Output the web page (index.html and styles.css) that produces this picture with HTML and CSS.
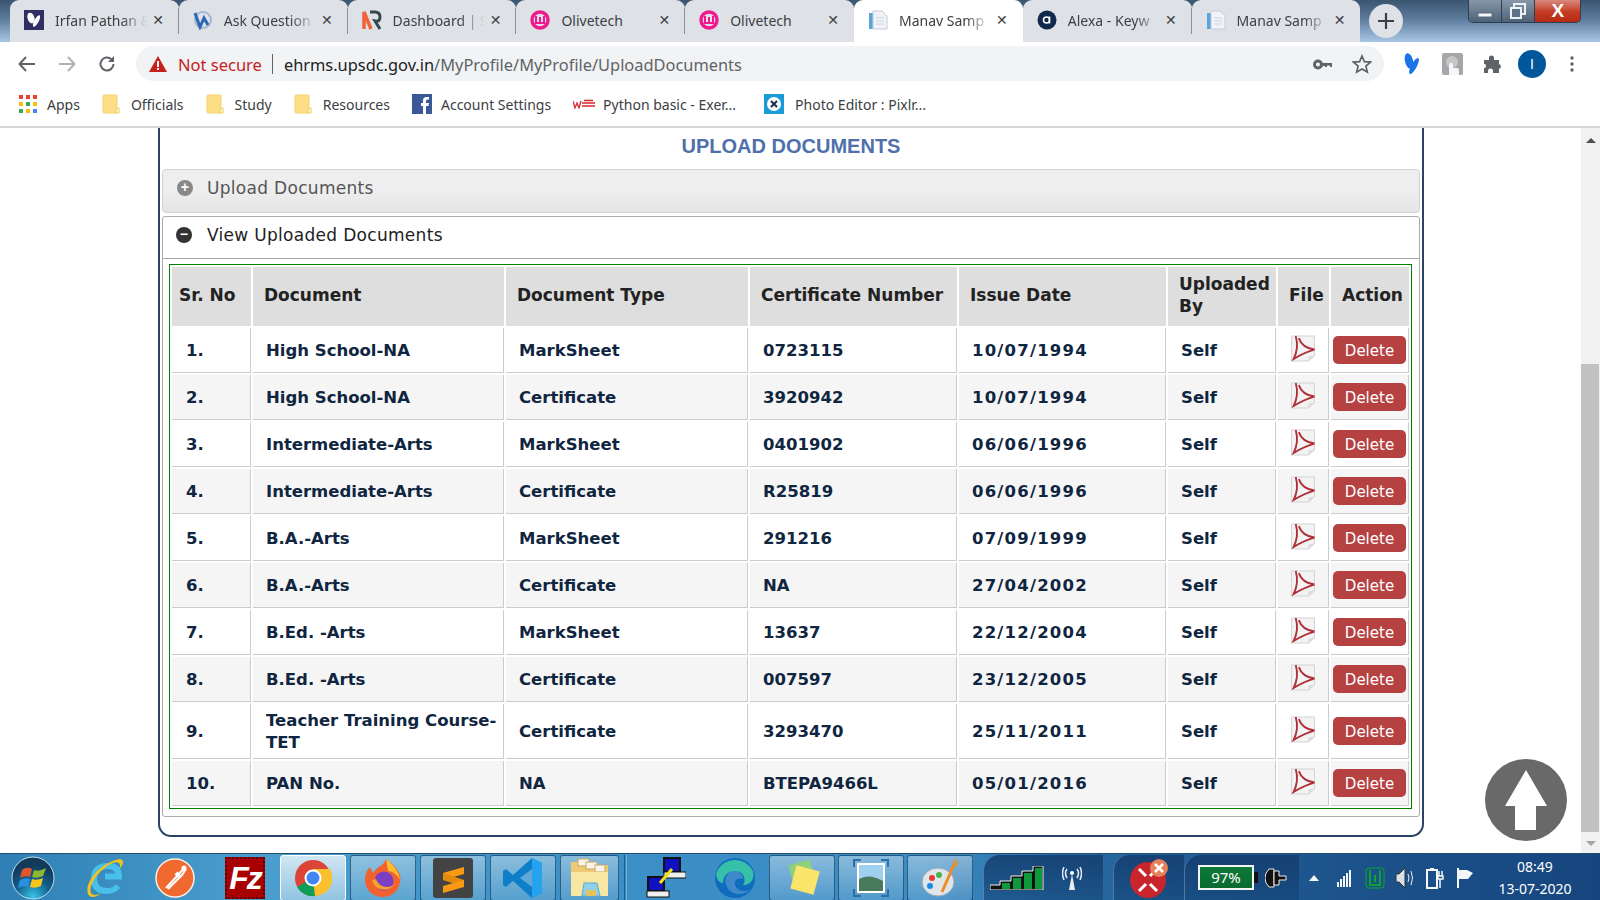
FILE: index.html
```html
<!DOCTYPE html>
<html lang="en">
<head>
  <meta charset="UTF-8">
  <title>Manav Sampada - Upload Documents</title>
  <link rel="stylesheet" href="styles.css">
</head>
<body>
  <svg class="defs" width="0" height="0">
    <symbol id="pdf" viewBox="0 0 24 26">
      <path d="M1 1H23V20L17 25H1Z" fill="#f3f3f3" stroke="#d4d4d4"/>
      <path d="M17 25L17.500 20.500L23 20Z" fill="#dcdcdc"/>
      <path d="M5 1C7 8 7 15 3 23C8 20 15 16 23 14C16 13 10 9 8 3" fill="none" stroke="#b03038" stroke-width="1.800"/>
    </symbol>
    <symbol id="doc" viewBox="0 0 20 20">
      <path d="M1 3H7V19H1Z" fill="#5aa4dc"/>
      <path d="M5 1H14L19 6V19H5Z" fill="#f0f3f7" stroke="#c6ccd4"/>
      <path d="M8 8H16M8 11H16M8 14H16" stroke="#d0d6de"/>
    </symbol>
    <symbol id="wamp" viewBox="0 0 20 20">
      <circle cx="10" cy="10" r="8" fill="none" stroke="#f01a8e" stroke-width="3.500"/>
      <path d="M6 6V13H14V6M10 7V13" fill="none" stroke="#f01a8e" stroke-width="2"/>
    </symbol>
    <symbol id="folder" viewBox="0 0 18 20">
      <path d="M1 2Q1 1 2 1H14Q15 1 15 2V19H2Q1 19 1 18Z" fill="#fcdf85" stroke="#f2d070"/>
      <path d="M14 14H17V19H14Z" fill="#fff2c4" stroke="#eecb66"/>
    </symbol>
  </svg>

  <div class="tabstrip">
    <div class="tab">
      <svg class="favicon" viewBox="0 0 20 20"><rect width="20" height="20" fill="#2f2f63"/><ellipse cx="7" cy="8" rx="3.500" ry="5.500" fill="#fff" transform="rotate(-18 7 8)"/><ellipse cx="12.500" cy="11" rx="2.200" ry="6.500" fill="#fff" transform="rotate(28 12.500 11)"/></svg>
      <span class="tab-title">Irfan Pathan &amp;</span>
      <span class="tab-close">✕</span>
    </div>
    <div class="tab">
      <svg class="favicon" viewBox="0 0 20 20"><circle cx="10" cy="10" r="8" fill="none" stroke="#9fb8d8" stroke-width="2"/><path d="M2 3L7 17L11 8L15 15" fill="none" stroke="#2c66b0" stroke-width="3"/></svg>
      <span class="tab-title">Ask Question</span>
      <span class="tab-close">✕</span>
    </div>
    <div class="tab">
      <svg class="favicon" viewBox="0 0 20 20"><path d="M2 19V2L9 19" fill="none" stroke="#f0623a" stroke-width="3.500"/><path d="M8 2H13Q18 2 18 7T13 11L18 19" fill="none" stroke="#37474f" stroke-width="3"/></svg>
      <span class="tab-title">Dashboard | S</span>
      <span class="tab-close">✕</span>
    </div>
    <div class="tab">
      <svg class="favicon"><use href="#wamp"/></svg>
      <span class="tab-title tab-title-full">Olivetech</span>
      <span class="tab-close">✕</span>
    </div>
    <div class="tab">
      <svg class="favicon"><use href="#wamp"/></svg>
      <span class="tab-title tab-title-full">Olivetech</span>
      <span class="tab-close">✕</span>
    </div>
    <div class="tab tab-active">
      <svg class="favicon"><use href="#doc"/></svg>
      <span class="tab-title">Manav Samp</span>
      <span class="tab-close">✕</span>
    </div>
    <div class="tab">
      <svg class="favicon" viewBox="0 0 20 20"><circle cx="10" cy="10" r="9.500" fill="#11294b"/><circle cx="9.500" cy="10" r="3" fill="none" stroke="#fff" stroke-width="1.500"/><path d="M12.500 6.500V13.500" stroke="#fff" stroke-width="1.500"/></svg>
      <span class="tab-title">Alexa - Keyw</span>
      <span class="tab-close">✕</span>
    </div>
    <div class="tab">
      <svg class="favicon"><use href="#doc"/></svg>
      <span class="tab-title">Manav Samp</span>
      <span class="tab-close">✕</span>
    </div>
    <div class="newtab">
      <svg width="18" height="18" viewBox="0 0 18 18"><path d="M9 1V17M1 9H17" stroke="#3c4043" stroke-width="2.200"/></svg>
    </div>
    <div class="winctl">
      <div class="winbtn"><svg width="16" height="12" viewBox="0 0 16 12"><rect x="1" y="8" width="14" height="4" fill="#f4f6f8" stroke="#5b6c7c"/></svg></div>
      <div class="winbtn"><svg width="16" height="16" viewBox="0 0 16 16"><rect x="4" y="1" width="11" height="10" fill="none" stroke="#eef2f6" stroke-width="2"/><rect x="1" y="5" width="10" height="10" fill="#5d7288" stroke="#eef2f6" stroke-width="2"/></svg></div>
      <div class="winbtn winbtn-close">X</div>
    </div>
  </div>

  <div class="toolbar">
    <div class="navbtn">
      <svg width="18" height="16" viewBox="0 0 18 16"><path d="M17 8H2M8 1L1.500 8L8 15" fill="none" stroke="#5f6368" stroke-width="2"/></svg>
    </div>
    <div class="navbtn">
      <svg width="18" height="16" viewBox="0 0 18 16"><path d="M1 8H16M10 1L16.500 8L10 15" fill="none" stroke="#b0b3b7" stroke-width="2"/></svg>
    </div>
    <div class="navbtn">
      <svg width="18" height="18" viewBox="0 0 18 18"><path d="M15.500 9A6.500 6.500 0 1 1 13.600 4.400" fill="none" stroke="#5f6368" stroke-width="2"/><path d="M16 1V7H10Z" fill="#5f6368"/></svg>
    </div>
    <div class="omnibox">
      <svg class="warn" width="18" height="16" viewBox="0 0 18 16"><path d="M9 0L18 16H0Z" fill="#c5221f"/><path d="M8 5H10V11H8ZM8 12H10V14H8Z" fill="#fff"/></svg>
      <span class="notsecure">Not secure</span>
      <span class="omni-sep"></span>
      <span class="url"><b>ehrms.upsdc.gov.in</b>/MyProfile/MyProfile/UploadDocuments</span>
      <svg class="omni-key" width="19" height="11" viewBox="0 0 19 11"><circle cx="5" cy="5.500" r="3.500" fill="none" stroke="#5f6368" stroke-width="3"/><path d="M9 4H19V8H17V6.500H14V8H12V7H9Z" fill="#5f6368"/></svg>
      <svg class="omni-star" width="20" height="20" viewBox="0 0 20 20"><path d="M10 2L12.400 7.600L18.500 8.100L13.900 12.100L15.300 18L10 14.900L4.700 18L6.100 12.100L1.500 8.100L7.600 7.600Z" fill="none" stroke="#5f6368" stroke-width="1.700"/></svg>
    </div>
    <div class="ext ext-first">
      <svg width="18" height="24" viewBox="0 0 18 24"><ellipse cx="6" cy="9" rx="4" ry="8" fill="#1a73e8" transform="rotate(-14 6 9)"/><ellipse cx="11" cy="14" rx="2.800" ry="9" fill="#1a73e8" transform="rotate(28 11 14)"/></svg>
    </div>
    <div class="ext">
      <svg width="21" height="22" viewBox="0 0 21 22"><rect width="21" height="22" rx="2" fill="#a6a6a6"/><circle cx="10" cy="9" r="6" fill="#c6c6c6"/><path d="M7 22V12Q7 9.500 9 9.500T11 12V15H15Q17 15 17 17V22Z" fill="#f2f6fa"/></svg>
    </div>
    <div class="ext">
      <svg width="18" height="18" viewBox="0 0 18 18"><path d="M1 5H6V3A2.500 2.500 0 0 1 11 3V5H16V9H15.500A2.500 2.500 0 0 1 15.500 14H16V18H10V16A2.500 2.500 0 0 0 5 16V18H1V13H2A2.500 2.500 0 0 0 2 9H1Z" fill="#5f6368"/></svg>
    </div>
    <div class="ext"><span class="avatar">I</span></div>
    <div class="ext">
      <svg width="4" height="18" viewBox="0 0 4 18"><circle cx="2" cy="3" r="1.700" fill="#5f6368"/><circle cx="2" cy="9" r="1.700" fill="#5f6368"/><circle cx="2" cy="15" r="1.700" fill="#5f6368"/></svg>
    </div>
  </div>

  <div class="bookmarks">
    <div class="bm bm-apps">
      <svg width="18" height="18" viewBox="0 0 18 18">
        <g fill="#ea4335"><rect width="4" height="4"/><rect x="7" width="4" height="4"/><rect x="14" width="4" height="4"/></g>
        <g fill="#fbbc04"><rect y="7" width="4" height="4"/><rect x="14" y="7" width="4" height="4"/><rect x="7" y="14" width="4" height="4"/></g>
        <g fill="#34a853"><rect x="7" y="7" width="4" height="4"/><rect y="14" width="4" height="4"/></g>
        <g fill="#4285f4"><rect x="14" y="14" width="4" height="4"/></g>
      </svg>
      <span>Apps</span>
    </div>
    <div class="bm"><svg class="bm-folder"><use href="#folder"/></svg><span>Officials</span></div>
    <div class="bm"><svg class="bm-folder"><use href="#folder"/></svg><span>Study</span></div>
    <div class="bm"><svg class="bm-folder"><use href="#folder"/></svg><span>Resources</span></div>
    <div class="bm bm-fb">
      <svg width="20" height="20" viewBox="0 0 20 20"><rect width="20" height="20" fill="#3b5998"/><path d="M14 20V12H16.500L17 9H14V7Q14 5.500 15.500 5.500H17V3H14.500Q11 3 11 6.500V9H9V12H11V20Z" fill="#fff"/></svg>
      <span>Account Settings</span>
    </div>
    <div class="bm bm-w3">
      <svg width="22" height="10" viewBox="0 0 22 10"><path d="M0 2L2 9L4 4L6 9L8 2M9 4H22M9 7H22M11 1.500H20" fill="none" stroke="#d8272d" stroke-width="1.300"/></svg>
      <span>Python basic - Exer...</span>
    </div>
    <div class="bm bm-last">
      <svg width="20" height="20" viewBox="0 0 20 20"><rect width="20" height="20" fill="#1a9ad6"/><circle cx="10" cy="10" r="7" fill="#fff"/><path d="M7 7L13 13M13 7L7 13" stroke="#11314d" stroke-width="2"/></svg>
      <span>Photo Editor : Pixlr...</span>
    </div>
  </div>

  <div class="viewport">
    <main class="page">
      <section class="panel">
        <h2 class="page-title">UPLOAD DOCUMENTS</h2>

        <div class="acc-head acc-closed">
          <span class="acc-icon">+</span>
          <span>Upload Documents</span>
        </div>

        <div class="acc-open">
          <div class="acc-head">
            <span class="acc-icon">−</span>
            <span>View Uploaded Documents</span>
          </div>
          <div class="acc-body">
            <div class="table-box">
              <table class="docs">
                <thead>
                  <tr>
                    <th class="col-sr">Sr. No</th>
                    <th class="col-doc">Document</th>
                    <th class="col-type">Document Type</th>
                    <th class="col-cert">Certificate Number</th>
                    <th class="col-date">Issue Date</th>
                    <th class="col-by">Uploaded By</th>
                    <th class="col-file">File</th>
                    <th class="col-act">Action</th>
                  </tr>
                </thead>
                <tbody>
                  <tr>
                    <td>1.</td><td>High School-NA</td><td>MarkSheet</td><td>0723115</td><td class="td-date">10/07/1994</td><td>Self</td>
                    <td class="file-cell"><svg class="pdf"><use href="#pdf"/></svg></td>
                    <td class="act-cell"><a class="btn-del">Delete</a></td>
                  </tr>
                  <tr>
                    <td>2.</td><td>High School-NA</td><td>Certificate</td><td>3920942</td><td class="td-date">10/07/1994</td><td>Self</td>
                    <td class="file-cell"><svg class="pdf"><use href="#pdf"/></svg></td>
                    <td class="act-cell"><a class="btn-del">Delete</a></td>
                  </tr>
                  <tr>
                    <td>3.</td><td>Intermediate-Arts</td><td>MarkSheet</td><td>0401902</td><td class="td-date">06/06/1996</td><td>Self</td>
                    <td class="file-cell"><svg class="pdf"><use href="#pdf"/></svg></td>
                    <td class="act-cell"><a class="btn-del">Delete</a></td>
                  </tr>
                  <tr>
                    <td>4.</td><td>Intermediate-Arts</td><td>Certificate</td><td>R25819</td><td class="td-date">06/06/1996</td><td>Self</td>
                    <td class="file-cell"><svg class="pdf"><use href="#pdf"/></svg></td>
                    <td class="act-cell"><a class="btn-del">Delete</a></td>
                  </tr>
                  <tr>
                    <td>5.</td><td>B.A.-Arts</td><td>MarkSheet</td><td>291216</td><td class="td-date">07/09/1999</td><td>Self</td>
                    <td class="file-cell"><svg class="pdf"><use href="#pdf"/></svg></td>
                    <td class="act-cell"><a class="btn-del">Delete</a></td>
                  </tr>
                  <tr>
                    <td>6.</td><td>B.A.-Arts</td><td>Certificate</td><td>NA</td><td class="td-date">27/04/2002</td><td>Self</td>
                    <td class="file-cell"><svg class="pdf"><use href="#pdf"/></svg></td>
                    <td class="act-cell"><a class="btn-del">Delete</a></td>
                  </tr>
                  <tr>
                    <td>7.</td><td>B.Ed. -Arts</td><td>MarkSheet</td><td>13637</td><td class="td-date">22/12/2004</td><td>Self</td>
                    <td class="file-cell"><svg class="pdf"><use href="#pdf"/></svg></td>
                    <td class="act-cell"><a class="btn-del">Delete</a></td>
                  </tr>
                  <tr>
                    <td>8.</td><td>B.Ed. -Arts</td><td>Certificate</td><td>007597</td><td class="td-date">23/12/2005</td><td>Self</td>
                    <td class="file-cell"><svg class="pdf"><use href="#pdf"/></svg></td>
                    <td class="act-cell"><a class="btn-del">Delete</a></td>
                  </tr>
                  <tr class="row-tall">
                    <td>9.</td><td>Teacher Training Course-TET</td><td>Certificate</td><td>3293470</td><td class="td-date">25/11/2011</td><td>Self</td>
                    <td class="file-cell"><svg class="pdf"><use href="#pdf"/></svg></td>
                    <td class="act-cell"><a class="btn-del">Delete</a></td>
                  </tr>
                  <tr>
                    <td>10.</td><td>PAN No.</td><td>NA</td><td>BTEPA9466L</td><td class="td-date">05/01/2016</td><td>Self</td>
                    <td class="file-cell"><svg class="pdf"><use href="#pdf"/></svg></td>
                    <td class="act-cell"><a class="btn-del">Delete</a></td>
                  </tr>
                </tbody>
              </table>
            </div>
          </div>
        </div>
      </section>

      <a class="scroll-top">
        <svg width="42" height="60" viewBox="0 0 42 60"><path d="M21 0L42 36H31V60H10V36H0Z" fill="#fff"/></svg>
      </a>
    </main>

    <div class="scrollbar">
      <span class="sb-arrow sb-up"></span>
      <div class="sb-track"><div class="sb-thumb"></div></div>
      <span class="sb-arrow sb-down"></span>
    </div>
  </div>

  <footer class="taskbar">
    <div class="tb-item tb-start">
      <svg width="44" height="44" viewBox="0 0 44 44">
        <defs>
          <radialGradient id="orb" cx="50%" cy="95%" r="75%"><stop offset="0" stop-color="#38c4ea"/><stop offset=".55" stop-color="#12608c"/><stop offset="1" stop-color="#123a5a"/></radialGradient>
        </defs>
        <circle cx="22" cy="22" r="21" fill="url(#orb)" stroke="#c4dcec"/>
        <path d="M11 14Q16 10 21 13L19 21Q14 19 9 22Z" fill="#e2562c"/>
        <path d="M23 14Q28 16 35 12L32 20Q26 23 21 21Z" fill="#8cb92f"/>
        <path d="M9 24Q14 21 19 23L17 31Q12 29 7 32Z" fill="#2b8fe0"/>
        <path d="M21 23Q26 25 32 22L30 30Q24 33 19 31Z" fill="#f5c518"/>
      </svg>
    </div>
    <div class="tb-item tb-ie">
      <svg width="38" height="42" viewBox="0 0 38 42">
        <path d="M19 19.500H33Q33 9 22 9Q8 9 8 22Q8 34 21 34Q28 34 32 29" fill="none" stroke="#48c0ec" stroke-width="6"/>
        <path d="M2 37C-2 26 14 5 34 2C40 3 36 10 33 12C36 6 32 4 27 6C14 11 2 28 5 36C7 39 12 38 15 36C10 41 4 41 2 37Z" fill="#f2c21e"/>
      </svg>
    </div>
    <div class="tb-item tb-plain">
      <svg width="40" height="40" viewBox="0 0 40 40"><circle cx="20" cy="20" r="19" fill="#f0692e" stroke="#fdeee6" stroke-width="1.500"/><path d="M11 30L24 16L30 9M13 31L27 17L31 11" fill="none" stroke="#fff" stroke-width="2"/><circle cx="29" cy="10" r="2.500" fill="#fff"/><path d="M21 15L25 19" stroke="#fff" stroke-width="4"/></svg>
    </div>
    <div class="tb-item tb-plain">
      <div class="fz">Fz</div>
    </div>
    <div class="tb-item tb-btn tb-btn-on">
      <svg width="38" height="38" viewBox="0 0 38 38">
        <circle cx="19" cy="19" r="18" fill="#db4437"/>
        <path d="M19 19L3 28A18 18 0 0 0 21 37Z" fill="#0f9d58"/>
        <path d="M19 10H36A18 18 0 0 1 21 37L19 19Z" fill="#fbc02d"/>
        <circle cx="19" cy="19" r="8.500" fill="#fff"/>
        <circle cx="19" cy="19" r="6.500" fill="#4285f4"/>
      </svg>
    </div>
    <div class="tb-item tb-btn">
      <svg width="38" height="40" viewBox="0 0 38 40">
        <path d="M19 39C8 39 1 31 1 22C1 16 3 12 6 9L9 15C13 8 20 8 22 1C26 4 33 9 36 17C38 28 31 39 19 39Z" fill="#f2622e"/>
        <path d="M22 1C27 5 35 12 36 22C33 16 28 13 24 13Z" fill="#ffbd2e"/>
        <circle cx="20" cy="23" r="9.500" fill="#7a3fc4"/>
        <path d="M8 22C10 32 24 36 31 26C26 31 15 30 12 21Z" fill="#f7a02c"/>
      </svg>
    </div>
    <div class="tb-item tb-btn">
      <svg width="40" height="40" viewBox="0 0 40 40"><rect width="40" height="40" rx="3" fill="#434343"/><path d="M31 9L10 15V22L31 16Z" fill="#fa9a13"/><path d="M10 15L31 22V29L10 22Z" fill="#e58a0c"/><path d="M31 22L10 28V35L31 29Z" fill="#fa9a13"/></svg>
    </div>
    <div class="tb-item tb-btn">
      <svg width="40" height="42" viewBox="0 0 40 42"><path d="M29 1L39 6V36L29 41L10 24L3 30L0 28V14L3 12L10 18Z" fill="#0f7ec8"/><path d="M29 1L39 6V36L29 41Z" fill="#25a3ee"/><path d="M29 12L17 21L29 30Z" fill="#5fa8d8"/></svg>
    </div>
    <div class="tb-item tb-btn tb-btn-folder">
      <svg width="40" height="40" viewBox="0 0 40 40"><path d="M1 4H15L18 7H38V38H1Z" fill="#eecb70"/><rect x="8" y="1" width="11" height="7" fill="#f8f4e8" stroke="#c8a860"/><rect x="16" y="4" width="11" height="7" fill="#f8f4e8" stroke="#c8a860"/><rect x="25" y="7" width="10" height="7" fill="#f8f4e8" stroke="#c8a860"/><path d="M1 38V14H38V38Z" fill="#f8e7a2"/><path d="M12 38L14 25H27L30 38Z" fill="#8fd0ec" stroke="#5fa8c8"/><path d="M16 32H26V38H16Z" fill="#e6c25a"/></svg>
    </div>
    <span class="tb-divider"></span>
    <div class="tb-item tb-flat tb-remote">
      <svg width="40" height="42" viewBox="0 0 40 42">
        <rect x="18" y="1" width="16" height="14" fill="#1010c0" stroke="#111" stroke-width="2"/>
        <rect x="18" y="15" width="22" height="6" fill="#eee" stroke="#111"/>
        <rect x="2" y="20" width="16" height="14" fill="#1010c0" stroke="#111" stroke-width="2"/>
        <rect x="1" y="34" width="22" height="6" fill="#eee" stroke="#111"/>
        <path d="M26 12L14 26" stroke="#f6e010" stroke-width="3"/>
      </svg>
    </div>
    <div class="tb-item tb-flat tb-edge">
      <svg width="40" height="42" viewBox="0 0 40 42">
        <circle cx="20" cy="21" r="20" fill="#0f6cbd"/>
        <path d="M1 18C4 2 28 -4 38 14C40 24 34 28 28 28C32 22 28 14 20 14C12 14 8 20 8 26C4 26 2 22 1 18Z" fill="#36c0a8"/>
        <path d="M20 14C12 14 8 22 12 30C16 38 28 40 36 32C30 36 22 34 20 28C19 24 22 20 28 22C28 18 25 14 20 14Z" fill="#fff" opacity=".2"/>
      </svg>
    </div>
    <div class="tb-item tb-btn tb-btn-sticky">
      <svg width="38" height="36" viewBox="0 0 38 36"><rect x="8" y="2" width="22" height="22" fill="#8fd07a" transform="rotate(-15 19 13)"/><rect x="10" y="8" width="24" height="24" fill="#fbe46a" transform="rotate(15 22 20)"/></svg>
    </div>
    <div class="tb-item tb-btn tb-btn-sticky">
      <svg width="36" height="38" viewBox="0 0 36 38"><path d="M1 8V1H8M28 1H35V8M35 30V37H28M8 37H1V30" fill="none" stroke="#2b6ea8" stroke-width="2"/><rect x="4" y="4" width="28" height="30" fill="#fff"/><rect x="6" y="6" width="24" height="26" fill="#9fd0ee"/><path d="M6 20Q16 14 30 22V32H6Z" fill="#4a7a5c"/></svg>
    </div>
    <div class="tb-item tb-btn tb-btn-sticky">
      <svg width="40" height="40" viewBox="0 0 40 40"><ellipse cx="18" cy="24" rx="16" ry="14" fill="#dfe6ea" stroke="#9aa8b2"/><circle cx="12" cy="20" r="3" fill="#e53935"/><circle cx="19" cy="17" r="3" fill="#4caf50"/><circle cx="10" cy="28" r="3" fill="#1e88e5"/><path d="M36 2L22 34" stroke="#f08a24" stroke-width="3"/><path d="M33 1L39 4L36 10Z" fill="#c89a5c"/></svg>
    </div>
    <div class="gadget gadget-net">
      <svg width="54" height="24" viewBox="0 0 54 24">
        <path d="M0 24V19H10V15H21V10H32V5H43V0H53V24Z" fill="#111" stroke="#f0f0f0"/>
        <g fill="#0c9a3c"><rect x="12" y="17" width="8" height="6"/><rect x="23" y="12" width="8" height="11"/><rect x="34" y="7" width="8" height="16"/><rect x="45" y="2" width="7" height="21"/></g>
      </svg>
      <svg width="20" height="24" viewBox="0 0 20 24"><path d="M10 8L7 24H13Z" fill="#e8eef4"/><path d="M5 3Q2 7 5 12M15 3Q18 7 15 12M2 1Q-1 7 2 14M18 1Q21 7 18 14" fill="none" stroke="#e8eef4" stroke-width="1.500"/><circle cx="10" cy="7" r="2" fill="#fff"/></svg>
    </div>
    <div class="gadget gadget-red">
      <svg width="42" height="42" viewBox="0 0 42 42"><circle cx="19" cy="23" r="18" fill="#c8262c"/><path d="M10 12L17 19M28 12L21 19M10 34L17 27M28 34L21 27" stroke="#fff" stroke-width="3"/><circle cx="30" cy="11" r="9" fill="#e77f5a"/><path d="M26 7L34 15M34 7L26 15" stroke="#fff" stroke-width="2.500"/></svg>
    </div>
    <div class="gadget gadget-batt">
      <div class="battery">97%</div>
      <svg width="22" height="20" viewBox="0 0 22 20"><path d="M9 1H4Q0 5 0 10T4 19H9Z" fill="#111" stroke="#eee"/><path d="M9 3H14V8H21V12H14V17H9Z" fill="#111" stroke="#eee"/></svg>
    </div>
    <div class="tray">
      <span class="tray-slot tray-slot-first"><span class="tray-up"></span></span>
      <span class="tray-slot"><svg width="16" height="18" viewBox="0 0 16 18"><g fill="#f4f6f8"><rect y="13" width="2" height="5"/><rect x="3" y="10" width="2" height="8"/><rect x="6" y="7" width="2" height="11"/><rect x="9" y="4" width="2" height="14"/><rect x="12" y="1" width="2" height="17"/></g></svg></span>
      <span class="tray-slot"><svg width="20" height="22" viewBox="0 0 20 22"><rect x="1" y="1" width="18" height="20" rx="3" fill="none" stroke="#0ca32e"/><path d="M5 3V18H15V3M10 8V15" fill="none" stroke="#0ca32e" stroke-width="2"/></svg></span>
      <span class="tray-slot"><svg width="20" height="22" viewBox="0 0 20 22"><path d="M1 7H4L10 1V21L4 15H1Z" fill="#d8e0e8" stroke="#333"/><path d="M13 7Q15 11 13 15M16 4Q19 11 16 18" fill="none" stroke="#e8eef4"/></svg></span>
      <span class="tray-slot"><svg width="18" height="22" viewBox="0 0 18 22"><rect x="1" y="3" width="10" height="18" fill="none" stroke="#f4f6f8" stroke-width="2"/><rect x="4" y="1" width="4" height="2" fill="#f4f6f8"/><path d="M13 4V9M16 4V9M12 9H17V12H12ZM14 12V21" fill="none" stroke="#f4f6f8" stroke-width="1.500"/></svg></span>
      <span class="tray-slot"><svg width="18" height="20" viewBox="0 0 18 20"><path d="M2 0V20" stroke="#f4f6f8" stroke-width="2"/><path d="M3 2H11L17 5L12 11H3Z" fill="#f4f6f8"/></svg></span>
    </div>
    <div class="clock">
      <span>08:49</span>
      <span>13-07-2020</span>
    </div>
  </footer>
</body>
</html>
```

FILE: styles.css
```css
* {
  box-sizing: border-box;
}
html, body {
  margin: 0;
  height: 900px;
  overflow: hidden;
}
body {
  font-family: "Noto Sans", sans-serif;
  background: #fff;
  display: flex;
  flex-direction: column;
}
.defs {
  display: none;
}

/* browser tabs */
.tabstrip {
  height: 42px;
  flex: none;
  display: flex;
  padding-left: 10px;
  background: linear-gradient(180deg, #3a5570 0, #5d7b9c 45%, #a9c6e6 100%);
}
.tab {
  width: 168.800px;
  height: 42px;
  flex: none;
  display: flex;
  align-items: center;
  padding: 0 13px 2px 14px;
  background: #dee1e6;
  border-radius: 9px 9px 0 0;
  position: relative;
  color: #3c4043;
  font-size: 14px;
}
.tab::after {
  content: "";
  position: absolute;
  right: 0;
  top: 8px;
  bottom: 8px;
  width: 1px;
  background: #8d9196;
}
.tab:nth-child(5)::after,
.tab-active::after,
.tab:nth-child(6)::after,
.tab:nth-child(8)::after {
  display: none;
}
.tab-active {
  background: #fff;
}
.favicon {
  width: 20px;
  height: 20px;
  flex: none;
  margin-right: 11px;
}
.tab-title {
  width: 92px;
  flex: none;
  white-space: nowrap;
  -webkit-mask-image: linear-gradient(90deg, #000 72%, transparent 100%);
  mask-image: linear-gradient(90deg, #000 72%, transparent 100%);
}
.tab-title-full {
  -webkit-mask-image: none;
  mask-image: none;
}
.tab-close {
  flex: none;
  width: 16px;
  margin-left: 3px;
  text-align: center;
  font-family: "DejaVu Sans", sans-serif;
  font-size: 14px;
  font-weight: bold;
}
.newtab {
  width: 34px;
  height: 34px;
  margin: 4px 0 0 9px;
  border-radius: 50%;
  background: #dee1e6;
  display: flex;
  align-items: center;
  justify-content: center;
}
.winctl {
  width: 113px;
  height: 23px;
  margin-left: 65px;
  display: flex;
  border: 1px solid #2d3e50;
  border-top: 0;
  border-radius: 0 0 5px 5px;
  overflow: hidden;
}
.winbtn {
  width: 33px;
  display: flex;
  align-items: center;
  justify-content: center;
  border-right: 1px solid #2d3e50;
  background: linear-gradient(180deg, #8797a8, #4e6277);
}
.winbtn-close {
  flex: 1;
  border-right: 0;
  background: linear-gradient(180deg, #d98a7c 0, #c33b22 55%, #b52a14 100%);
  color: #fff;
  font-family: "Liberation Sans", sans-serif;
  font-weight: bold;
  font-size: 19px;
}

/* address bar */
.toolbar {
  height: 43px;
  flex: none;
  display: flex;
  align-items: center;
  padding-left: 7px;
  background: #fff;
}
.navbtn {
  width: 40px;
  display: flex;
  justify-content: center;
}
.omnibox {
  width: 1248px;
  height: 35px;
  margin-left: 9px;
  display: flex;
  align-items: center;
  padding: 1px 12px 0 13px;
  background: #f1f3f4;
  border-radius: 18px;
  font-size: 16.500px;
}
.warn {
  flex: none;
}
.notsecure {
  margin-left: 11px;
  color: #c5221f;
}
.omni-sep {
  width: 1px;
  height: 20px;
  margin: 0 11px 0 10px;
  background: #5f6368;
}
.url {
  flex: 1;
  color: #5f6368;
  white-space: nowrap;
  font-size: 16.400px;
}
.url b {
  font-weight: normal;
  color: #202124;
}
.omni-star {
  margin-left: 20px;
}
.ext {
  width: 40px;
  display: flex;
  justify-content: center;
  align-items: center;
  flex: none;
}
.ext-first {
  margin-left: 8px;
}
.avatar {
  width: 28px;
  height: 28px;
  border-radius: 50%;
  background: #01579b;
  color: #fff;
  font-family: "Liberation Sans", sans-serif;
  font-size: 14px;
  text-align: center;
  line-height: 28px;
}

/* bookmarks */
.bookmarks {
  height: 43px;
  flex: none;
  display: flex;
  align-items: center;
  padding: 0 0 3px 19px;
  background: #fff;
  border-bottom: 2px solid #d6d6d6;
  color: #3c4043;
  font-size: 14px;
}
.bm {
  display: flex;
  align-items: center;
  gap: 11px;
  margin-right: 22px;
  white-space: nowrap;
}
.bm-apps {
  gap: 10px;
}
.bm-fb {
  gap: 9px;
}
.bm-w3 {
  gap: 8px;
  margin-right: 28px;
}
.bm-folder {
  width: 18px;
  height: 20px;
}

/* page area */
.viewport {
  height: 725px;
  flex: none;
  display: flex;
  overflow: hidden;
}
.page {
  flex: 1;
  position: relative;
  padding-left: 158px;
}
.panel {
  width: 1266px;
  height: 709px;
  padding: 0 2px;
  border: 2px solid #2a4365;
  border-top: 0;
  border-radius: 0 0 13px 13px;
}
.page-title {
  margin: 0;
  height: 41px;
  padding-top: 5px;
  text-align: center;
  font: bold 20px/26px "Liberation Sans", sans-serif;
  color: #4f70ab;
}
.acc-head {
  height: 41px;
  display: flex;
  align-items: center;
  padding: 0 0 6px 13px;
  gap: 15px;
  font-family: "DejaVu Sans", sans-serif;
  font-size: 17px;
  letter-spacing: .3px;
  color: #222;
}
.acc-closed {
  height: 44px;
  padding-bottom: 6px;
  margin-bottom: 3px;
  border: 1px solid #d3d3d3;
  border-radius: 4px;
  background: linear-gradient(180deg, #eeeeee 0, #eeeeee 50%, #e4e4e4 100%);
  color: #555;
}
.acc-icon {
  width: 16px;
  height: 16px;
  flex: none;
  border-radius: 50%;
  background: #333;
  color: #fff;
  font: bold 14px/15px "Liberation Sans", sans-serif;
  text-align: center;
}
.acc-closed .acc-icon {
  background: #888;
  margin-left: 1px;
  margin-right: -1px;
}
.acc-open {
  height: 601px;
  border: 1px solid #aaa;
  border-radius: 3px;
}
.acc-body {
  padding: 5px 6px 0;
  border-top: 1px solid #aaa;
}

/* documents table */
.table-box {
  width: 1243px;
  border: 1px solid #008000;
}
.docs {
  width: 1241px;
  table-layout: fixed;
  border-collapse: separate;
  border-spacing: 2px;
  margin: 0;
  font-family: "DejaVu Sans", sans-serif;
  font-size: 16.500px;
  font-weight: bold;
  color: #0f2540;
}
.docs th {
  height: 59px;
  padding: 0 0 3px 11px;
  background: #dedede;
  color: #222;
  font-size: 17px;
  text-align: left;
  line-height: 22px;
}
.docs td {
  height: 45px;
  padding: 2px 0 0 13px;
  border-right: 1px solid #ccc;
  border-bottom: 1px solid #ccc;
  line-height: 22px;
}
.docs td.td-date {
  letter-spacing: 1.200px;
}
.docs tbody tr:nth-child(even) td {
  background: #f5f5f5;
}
.docs .row-tall td {
  height: 55px;
}
.docs th.col-sr {
  padding-left: 7px;
}
.docs td:first-child {
  padding-left: 14px;
}
.col-sr { width: 79px; }
.col-doc { width: 251px; }
.col-type { width: 242px; }
.col-cert { width: 207px; }
.col-date { width: 207px; }
.col-by { width: 108px; }
.col-file { width: 51px; }
.col-act { width: 78px; }
.docs td.file-cell {
  padding: 0 0 3px 12px;
}
.pdf {
  display: block;
  width: 26px;
  height: 27px;
}
.docs td.act-cell {
  padding: 0 0 0 2px;
}
.btn-del {
  display: block;
  width: 73px;
  height: 28px;
  border-radius: 5px;
  background: #b54141;
  color: #fff;
  font-size: 15px;
  font-weight: normal;
  line-height: 30px;
  text-align: center;
}
.scroll-top {
  position: absolute;
  left: 1485px;
  top: 631px;
  width: 82px;
  height: 82px;
  border-radius: 50%;
  background: #696969;
  display: flex;
  align-items: center;
  justify-content: center;
}

/* scrollbar */
.scrollbar {
  width: 19px;
  flex: none;
  display: flex;
  flex-direction: column;
  background: #f1f1f1;
}
.sb-track {
  flex: 1;
  padding-top: 212px;
}
.sb-thumb {
  height: 468px;
  margin: 0 1px 0 0;
  background: #c1c1c1;
}
.sb-arrow {
  height: 19px;
  flex: none;
  display: flex;
  align-items: center;
  justify-content: center;
}
.sb-arrow::before {
  content: "";
  border-left: 5px solid transparent;
  border-right: 5px solid transparent;
}
.sb-up {
  height: 24px;
}
.sb-up::before {
  border-bottom: 5px solid #505050;
}
.sb-down::before {
  border-top: 5px solid #a3a3a3;
}

/* windows taskbar */
.taskbar {
  height: 48px;
  flex: none;
  display: flex;
  align-items: center;
  border-top: 1px solid #1f4e70;
  background: linear-gradient(90deg, #2f7fb4 0, #4a9fcf 16%, #3c90c6 36%, #3a8cc4 58%, #2a6da6 66%, #1f5a92 76%, #17457e 100%);
  color: #fff;
}
.tb-item {
  flex: none;
  height: 46px;
  display: flex;
  align-items: center;
  justify-content: center;
}
.tb-start {
  width: 66px;
}
.tb-ie {
  width: 70px;
  margin-left: 4px;
}
.tb-plain {
  width: 70px;
}
.tb-btn {
  width: 66px;
  margin-right: 4px;
  border: 1px solid rgba(16, 52, 84, .65);
  border-radius: 3px;
  background: linear-gradient(180deg, rgba(255, 255, 255, .4), rgba(255, 255, 255, .12));
}
.tb-btn-on {
  background: linear-gradient(180deg, rgba(255, 255, 255, .75), rgba(255, 255, 255, .4));
  border-color: #fff;
}
.tb-btn-folder {
  width: 59px;
  margin-right: 0;
}
.tb-btn-sticky {
  margin-right: 3px;
}
.tb-divider {
  width: 3px;
  height: 46px;
  margin-left: 5px;
  flex: none;
  border-left: 1px solid #1d5d8c;
  border-right: 1px solid #6cb0d8;
}
.tb-flat {
  width: 70px;
}
.tb-remote {
  margin-left: 4px;
}
.tb-edge {
  width: 68px;
}
.fz {
  width: 40px;
  height: 42px;
  background: #a80000;
  border: 2px dotted #5c0000;
  color: #fff;
  font: italic bold 32px/38px "Liberation Sans", sans-serif;
  letter-spacing: -2px;
  text-align: center;
}
.gadget {
  flex: none;
  height: 46px;
  display: flex;
  align-items: center;
  border-top-left-radius: 16px;
  border-left: 1px solid rgba(255, 255, 255, .25);
  background: linear-gradient(180deg, rgba(20, 60, 110, .85), rgba(20, 70, 120, .6));
}
.gadget-net {
  width: 120px;
  margin-left: 7px;
  padding-left: 6px;
  gap: 18px;
}
.gadget-red {
  width: 71px;
  margin-left: 10px;
  padding-left: 15px;
}
.gadget-batt {
  width: 115px;
  padding-left: 13px;
  gap: 11px;
}
.battery {
  width: 56px;
  height: 25px;
  border: 2px solid #f4f4f4;
  background: linear-gradient(180deg, #0c7a38, #0a6a30);
  font-size: 15px;
  line-height: 21px;
  text-align: center;
  position: relative;
}
.battery::after {
  content: "";
  position: absolute;
  right: -6px;
  top: 5px;
  width: 4px;
  height: 11px;
  background: #111;
}
.tray {
  flex: none;
  width: 186px;
  height: 46px;
  display: flex;
  align-items: center;
}
.tray-slot {
  width: 30px;
  flex: none;
  display: flex;
  justify-content: center;
  align-items: center;
}
.tray-slot-first {
  margin-right: 1px;
}
.tray-up {
  border-left: 5px solid transparent;
  border-right: 5px solid transparent;
  border-bottom: 6px solid #f4f6f8;
}
.clock {
  width: 100px;
  flex: none;
  display: flex;
  flex-direction: column;
  align-items: center;
  gap: 5px;
  font-size: 14px;
  line-height: 17px;
}
```
